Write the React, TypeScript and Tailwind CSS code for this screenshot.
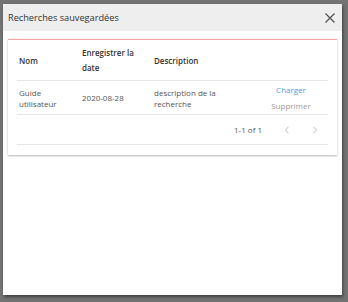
import React from 'react';

// One saved search row
interface SavedSearch {
    name: string[];
    date: string;
    description: string[];
}

const rows: SavedSearch[] = [
    { name: ['Guide', 'utilisateur'], date: '2020-08-28', description: ['description de la', 'recherche'] },
];

const font = { fontFamily: '"Open Sans", "Noto Sans", sans-serif' };

export default function App() {
    return (
        <div className="h-[302px] w-[348px] overflow-hidden bg-[#737373] pl-[3px] pt-[4px]" style={font}>
            {/* Modal */}
            <div className="flex h-[291px] w-[339px] flex-col bg-white shadow-[1px_2px_3px_rgba(0,0,0,0.45)]">
                {/* Header */}
                <div className="flex h-[27px] items-center justify-between bg-[#eeeeee] pl-[5px] pr-[8px]">
                    <span className="text-[9.2px] text-[#333333]">Recherches sauvegardées</span>
                    <svg width="10" height="10" viewBox="0 0 10 10" className="-mr-[1px]">
                        <path d="M0.5 0.5L9.5 9.5M9.5 0.5L0.5 9.5" stroke="#555555" strokeWidth="1.3" />
                    </svg>
                </div>

                {/* Body */}
                <div className="px-[5px] pt-[8px]">
                    <div className="border-t border-[#f3a5a5] bg-white px-[9px] pb-[10px] shadow-[0_1px_2px_rgba(0,0,0,0.3)]">
                        {/* Column headers */}
                        <div className="grid h-[41px] grid-cols-[63px_72px_101px_1fr] items-center border-b border-[#e6e6e6] text-[8px] font-semibold leading-[15px] text-[#333333]">
                            <div className="pl-[2px]">Nom</div>
                            <div className="pl-[2px]">
                                Enregistrer la
                                <br />
                                date
                            </div>
                            <div className="pl-[2px]">Description</div>
                            <div />
                        </div>

                        {/* Rows */}
                        {rows.map((row) => (
                            <div
                                key={row.date}
                                className="grid h-[34px] grid-cols-[63px_72px_101px_1fr] items-center border-b border-[#e6e6e6] text-[8px] leading-[11px] text-[#555555]"
                            >
                                <div className="pl-[2px]">
                                    {row.name[0]}
                                    <br />
                                    {row.name[1]}
                                </div>
                                <div className="pl-[2px]">{row.date}</div>
                                <div className="pl-[2px]">
                                    {row.description[0]}
                                    <br />
                                    {row.description[1]}
                                </div>
                                <div className="flex flex-col items-center gap-[6px] pl-[1px] text-[8px] leading-[10px]">
                                    <span className="text-[#4a9ee6]">Charger</span>
                                    <span className="text-[#9a9a9a]">Supprimer</span>
                                </div>
                            </div>
                        ))}

                        {/* Pagination */}
                        <div className="flex h-[30px] items-center justify-end border-b border-[#e6e6e6] pr-[10px] text-[8px] text-[#555555]">
                            <span className="mr-[22px]">1-1 of 1</span>
                            <svg width="6" height="8" viewBox="0 0 6 8" className="mr-[22px]">
                                <path d="M4.5 0.8L1.5 4L4.5 7.2" stroke="#bbbbbb" strokeWidth="1" fill="none" />
                            </svg>
                            <svg width="6" height="8" viewBox="0 0 6 8">
                                <path d="M1.5 0.8L4.5 4L1.5 7.2" stroke="#bbbbbb" strokeWidth="1" fill="none" />
                            </svg>
                        </div>
                    </div>
                </div>
            </div>
        </div>
    );
}
